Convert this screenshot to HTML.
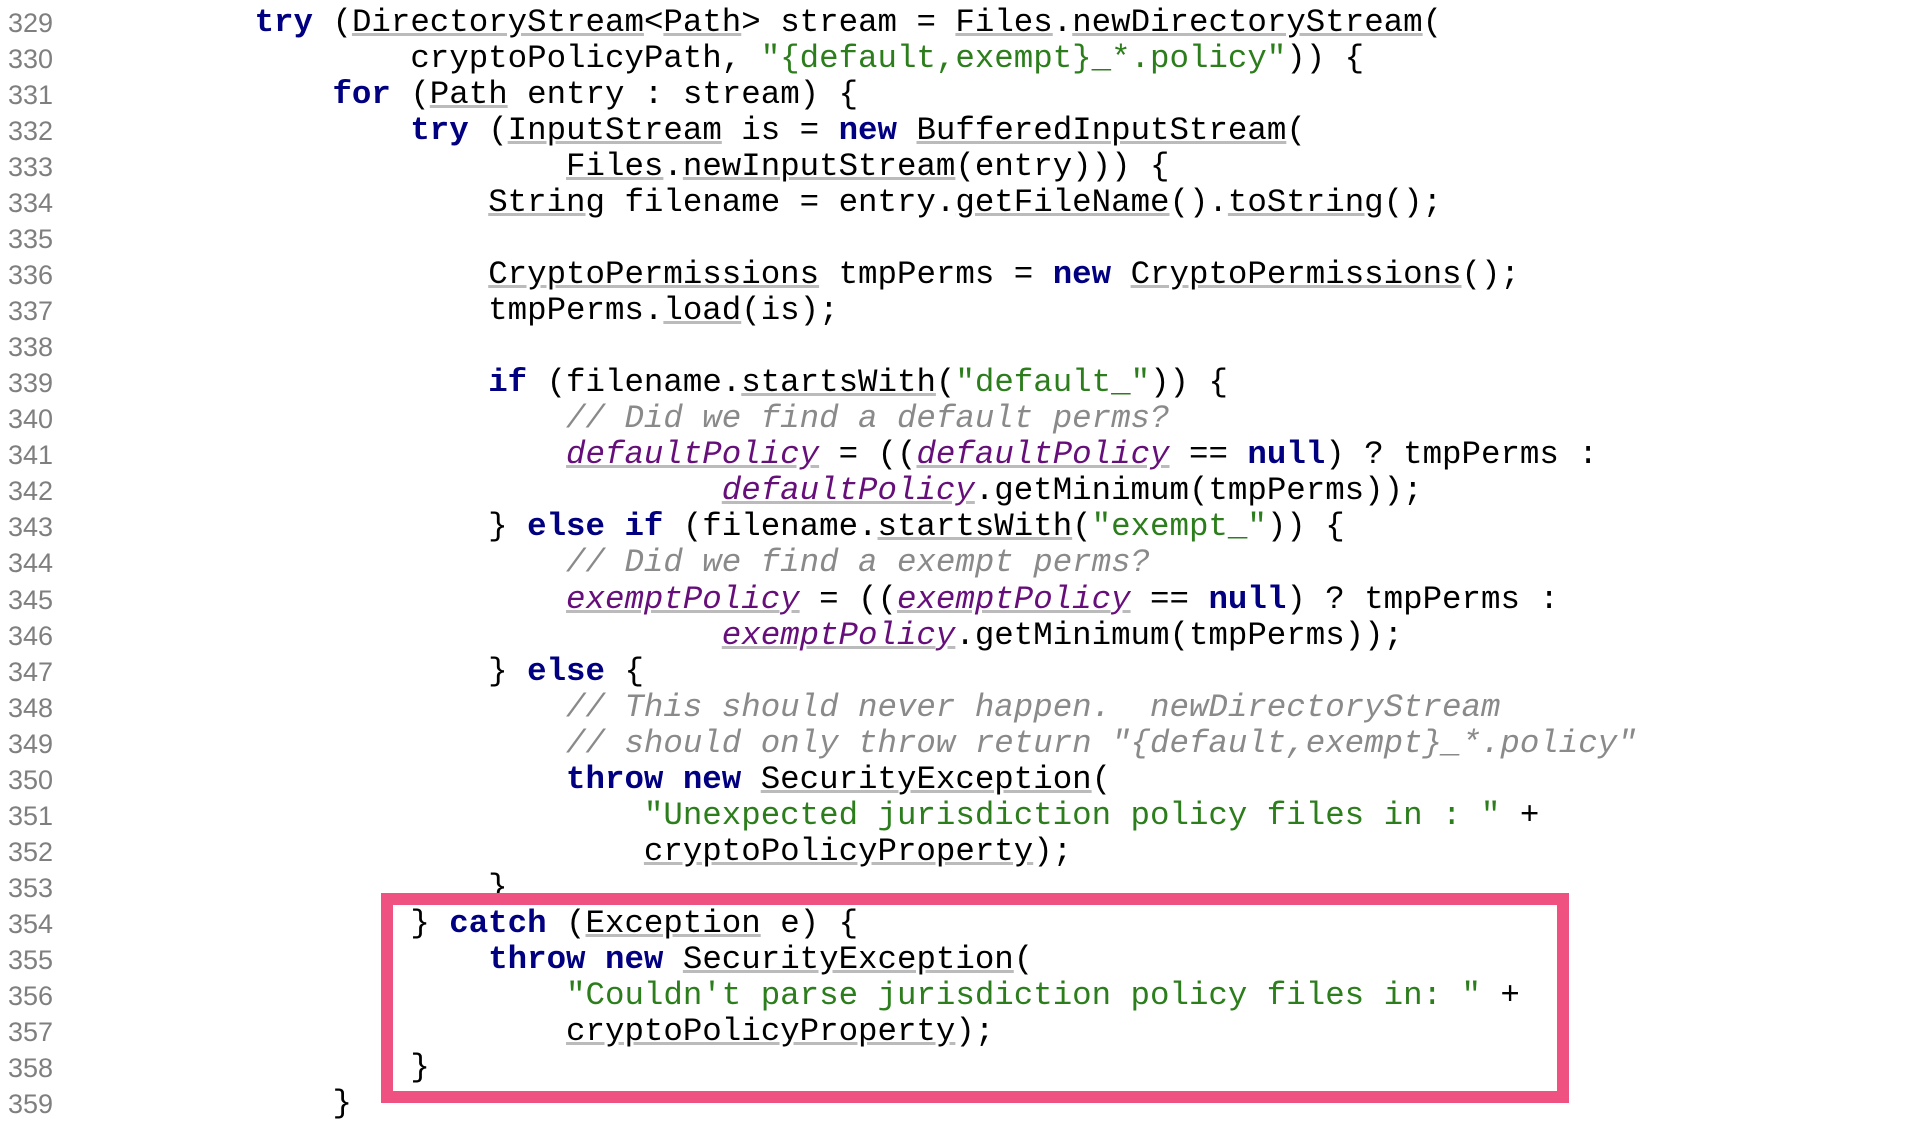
<!DOCTYPE html>
<html><head><meta charset="utf-8"><style>
html,body{margin:0;padding:0;background:#fff;width:1926px;height:1124px;overflow:hidden;position:relative}
.ln{position:absolute;left:8px;top:5px;font-family:"Liberation Sans",sans-serif;font-size:27px;line-height:36.03px;color:#7f7f7f;white-space:pre}
.code{position:absolute;left:21px;top:5px;font-family:"Liberation Mono",monospace;font-size:32.45px;line-height:36.03px;color:#000;white-space:pre}
.k{color:#000080;font-weight:bold}
.s{color:#2c7d1c}
.c{color:#8a8a8a;font-style:italic}
.f{color:#660e7a;font-style:italic;text-decoration:underline;text-decoration-color:#bbb}
.u{text-decoration:underline;text-decoration-color:#bbb}
.box{position:absolute;left:381px;top:893px;width:1164px;height:186px;border:12px solid #ef5280}
</style></head><body>
<div class="ln">329
330
331
332
333
334
335
336
337
338
339
340
341
342
343
344
345
346
347
348
349
350
351
352
353
354
355
356
357
358
359</div>
<div class="code">            <span class="k">try</span> (<span class="u">DirectoryStream</span>&lt;<span class="u">Path</span>&gt; stream = <span class="u">Files</span>.<span class="u">newDirectoryStream</span>(
                    cryptoPolicyPath, <span class="s">"{default,exempt}_*.policy"</span>)) {
                <span class="k">for</span> (<span class="u">Path</span> entry : stream) {
                    <span class="k">try</span> (<span class="u">InputStream</span> is = <span class="k">new</span> <span class="u">BufferedInputStream</span>(
                            <span class="u">Files</span>.<span class="u">newInputStream</span>(entry))) {
                        <span class="u">String</span> filename = entry.<span class="u">getFileName</span>().<span class="u">toString</span>();

                        <span class="u">CryptoPermissions</span> tmpPerms = <span class="k">new</span> <span class="u">CryptoPermissions</span>();
                        tmpPerms.<span class="u">load</span>(is);

                        <span class="k">if</span> (filename.<span class="u">startsWith</span>(<span class="s">"default_"</span>)) {
                            <span class="c">// Did we find a default perms?</span>
                            <span class="f">defaultPolicy</span> = ((<span class="f">defaultPolicy</span> == <span class="k">null</span>) ? tmpPerms :
                                    <span class="f">defaultPolicy</span>.getMinimum(tmpPerms));
                        } <span class="k">else if</span> (filename.<span class="u">startsWith</span>(<span class="s">"exempt_"</span>)) {
                            <span class="c">// Did we find a exempt perms?</span>
                            <span class="f">exemptPolicy</span> = ((<span class="f">exemptPolicy</span> == <span class="k">null</span>) ? tmpPerms :
                                    <span class="f">exemptPolicy</span>.getMinimum(tmpPerms));
                        } <span class="k">else</span> {
                            <span class="c">// This should never happen.  newDirectoryStream</span>
                            <span class="c">// should only throw return "{default,exempt}_*.policy"</span>
                            <span class="k">throw new</span> <span class="u">SecurityException</span>(
                                <span class="s">"Unexpected jurisdiction policy files in : "</span> +
                                <span class="u">cryptoPolicyProperty</span>);
                        }
                    } <span class="k">catch</span> (<span class="u">Exception</span> e) {
                        <span class="k">throw new</span> <span class="u">SecurityException</span>(
                            <span class="s">"Couldn't parse jurisdiction policy files in: "</span> +
                            <span class="u">cryptoPolicyProperty</span>);
                    }
                }</div>
<div class="box"></div>
</body></html>
